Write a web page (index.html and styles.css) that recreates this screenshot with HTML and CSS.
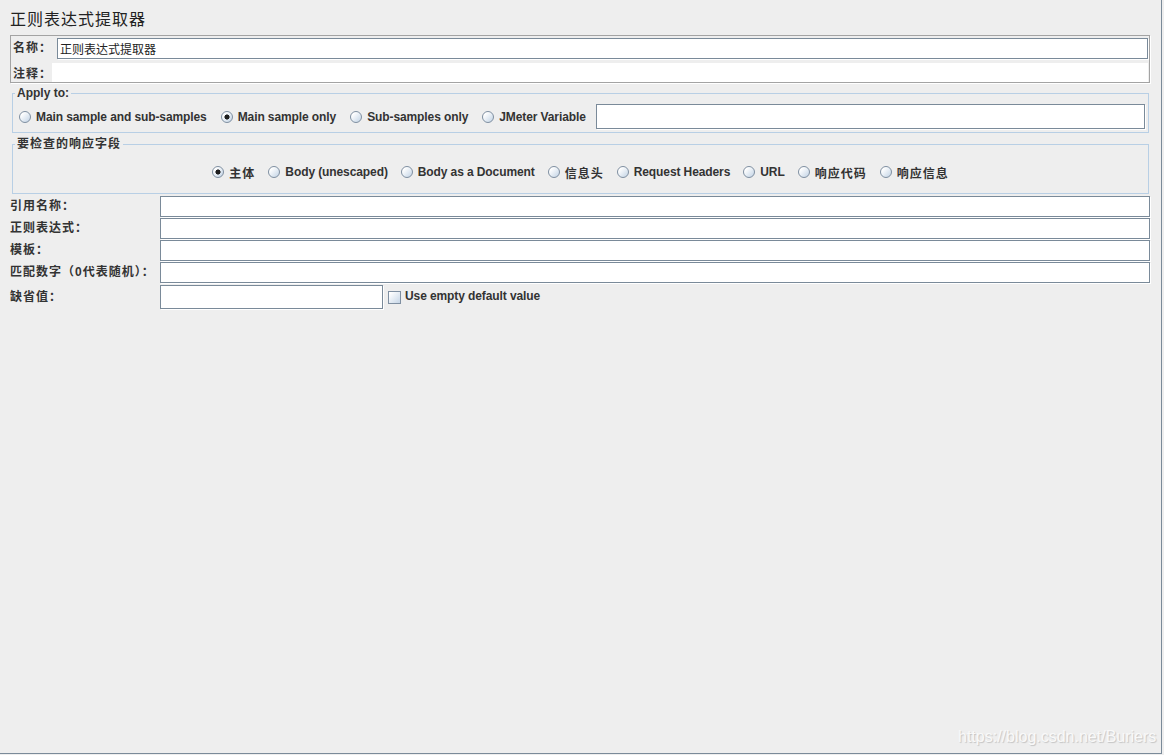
FILE: index.html
```html
<!DOCTYPE html>
<html lang="zh-CN">
<head>
    <meta charset="UTF-8">
    <title>正则表达式提取器</title>
    <link rel="stylesheet" href="styles.css">
</head>
<body>
    <div class="frame">
        <!-- タイトル -->
        <h1 class="title">正则表达式提取器</h1>

        <!-- 名称・注释 -->
        <div class="name-panel">
            <div class="name-row">
                <label class="lbl cjk name-lbl">名称：</label>
                <div class="field name-field">正则表达式提取器</div>
            </div>
            <div class="name-row comment-row">
                <label class="lbl cjk comment-lbl">注释：</label>
                <div class="comment-field"></div>
            </div>
        </div>

        <!-- Apply to -->
        <fieldset class="group apply">
            <legend>Apply to:</legend>
            <div class="opts">
                <span class="opt"><span class="radio"></span>Main sample and sub-samples</span>
                <span class="opt"><span class="radio on"></span>Main sample only</span>
                <span class="opt"><span class="radio"></span>Sub-samples only</span>
                <span class="opt"><span class="radio"></span>JMeter Variable</span>
                <div class="field var-field"></div>
            </div>
        </fieldset>

        <!-- 要检查的响应字段 -->
        <fieldset class="group fields">
            <legend class="cjk">要检查的响应字段</legend>
            <div class="opts centered">
                <span class="opt"><span class="radio on"></span><span class="cjk">主体</span></span>
                <span class="opt"><span class="radio"></span>Body (unescaped)</span>
                <span class="opt"><span class="radio"></span>Body as a Document</span>
                <span class="opt"><span class="radio"></span><span class="cjk">信息头</span></span>
                <span class="opt"><span class="radio"></span>Request Headers</span>
                <span class="opt"><span class="radio"></span>URL</span>
                <span class="opt"><span class="radio"></span><span class="cjk">响应代码</span></span>
                <span class="opt"><span class="radio"></span><span class="cjk">响应信息</span></span>
            </div>
        </fieldset>

        <!-- 入力欄 -->
        <div class="form">
            <label class="lbl cjk">引用名称：</label>
            <div class="field"></div>
            <label class="lbl cjk">正则表达式：</label>
            <div class="field"></div>
            <label class="lbl cjk">模板：</label>
            <div class="field"></div>
            <label class="lbl cjk">匹配数字（0代表随机）：</label>
            <div class="field"></div>
            <label class="lbl cjk default-lbl">缺省值：</label>
            <div class="default-row">
                <div class="field default-field"></div>
                <span class="check"></span>
                <span class="lbl">Use empty default value</span>
            </div>
        </div>

        <div class="watermark">https://blog.csdn.net/Buriers</div>
    </div>
</body>
</html>
```

FILE: styles.css
```css
/* ページ全体 */
body {
    margin: 0;
    background-color: #eeeeee;
    font-family: "Liberation Sans", "Noto Sans CJK SC", sans-serif;
    font-size: 12px;
    color: #333333;
}
* {
    box-sizing: border-box;
}
.frame {
    position: relative;
    width: 1162px;
    height: 754px;
    padding: 0 10px;
    border-right: 1px solid #7a8a99;
    border-bottom: 1px solid #7a8a99;
}
.cjk {
    letter-spacing: 1px;
}
.title {
    margin: 0 0 7px 0;
    padding-top: 8px;
    font-size: 16px;
    line-height: 20px;
    font-weight: normal;
    letter-spacing: 1px;
    color: #222222;
    font-family: "Noto Sans CJK SC", sans-serif;
}
.lbl {
    font-weight: bold;
    white-space: nowrap;
}
/* テキストフィールド（Metal風の枠） */
.field {
    height: 21px;
    background: #ffffff;
    border: 1px solid #7a8a99;
    box-shadow: 1px 1px 0 #ffffff;
}
/* 名称パネル */
.name-panel {
    margin-right: 1px;
    border: 1px solid #a3a3a3;
    box-shadow: 1px 1px 0 #ffffff;
    padding: 1px 0 0 1px;
}
.name-row {
    display: flex;
    align-items: center;
    height: 22px;
}
.name-lbl {
    width: 45px;
    padding-left: 1px;
    line-height: 20px;
}
.name-field {
    flex: 1;
    margin-right: 1px;
    padding: 0 2px;
    line-height: 19px;
    font-family: "Noto Sans CJK SC", sans-serif;
    font-weight: normal;
    color: #222222;
}
.comment-row {
    margin-top: 4px;
    height: 19px;
}
.comment-lbl {
    width: 40px;
    padding-left: 1px;
}
.comment-field {
    flex: 1;
    align-self: stretch;
    background: #ffffff;
    margin-right: 1px;
}
/* グループ枠 */
.group {
    margin: 3px 2px 0 2px;
    border: 1px solid #b8cfe5;
    min-inline-size: 0;
}
.group legend {
    font-weight: bold;
    line-height: 14px;
    padding: 0 2px;
    margin-left: -4px;
}
.apply {
    padding: 4px 2px 3px 6px;
}
.fields {
    margin-top: 4px;
    padding: 13px 6px 13px 6px;
}
.opts {
    display: flex;
    align-items: center;
}
.centered {
    justify-content: center;
    height: 16px;
}
.opt {
    display: flex;
    align-items: center;
    font-weight: bold;
    white-space: nowrap;
    letter-spacing: -0.1px;
}
.opt + .opt {
    margin-left: 13px;
}
.apply .opt + .opt {
    margin-left: 14px;
}
.opt .cjk {
    letter-spacing: 1px;
}
/* ラジオボタン */
.radio {
    width: 12px;
    height: 12px;
    margin-right: 5px;
    border-radius: 50%;
    border: 1px solid #7f8fa1;
    background: linear-gradient(135deg, #ffffff 20%, #c9d8e8 90%);
}
.radio.on {
    background: radial-gradient(circle, #1e1e1e 0 2.3px, transparent 2.8px),
                linear-gradient(135deg, #ffffff 20%, #c9d8e8 90%);
}
.var-field {
    flex: 1;
    height: 25px;
    margin-left: 10px;
    margin-right: 1px;
}
/* 下部フォーム */
.form {
    margin-top: 2px;
    display: grid;
    grid-template-columns: 150px 1fr;
    grid-auto-rows: 22px;
    align-items: start;
}
.form .lbl {
    line-height: 20px;
}
.form > .field {
    margin-right: 1px;
}
.form .default-lbl {
    line-height: 26px;
}
.default-row {
    display: flex;
    align-items: center;
    height: 25px;
}
.default-field {
    width: 223px;
    height: 24px;
}
.check {
    width: 13px;
    height: 13px;
    margin: 1px 4px 0 5px;
    border: 1px solid #7f8fa1;
    background: linear-gradient(135deg, #ffffff 10%, #c9d8e8 95%);
}
.default-row .lbl {
    line-height: 25px;
    letter-spacing: -0.1px;
}
/* 透かし */
.watermark {
    position: absolute;
    left: 958px;
    top: 728px;
    font-size: 16px;
    color: #f9f9f9;
    text-shadow: 1px 1px 1px rgba(0, 0, 0, 0.18);
}
```
